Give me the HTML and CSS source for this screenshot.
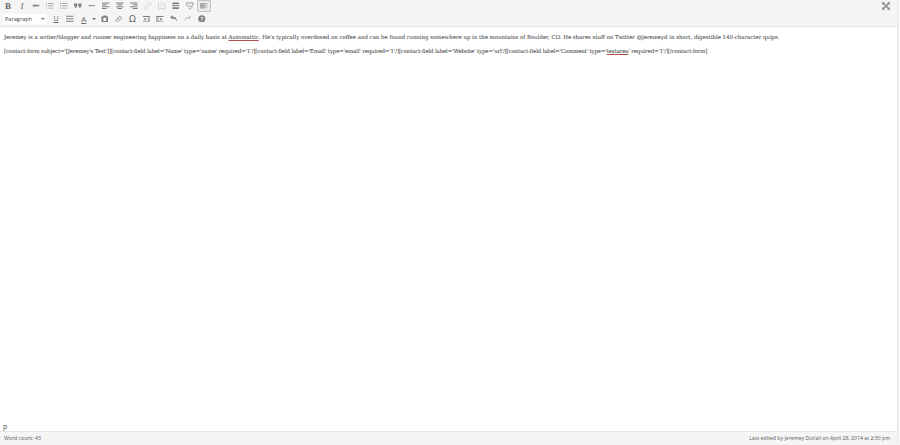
FILE: index.html
```html
<!DOCTYPE html>
<html lang="en">
<head>
  <meta charset="UTF-8">
  <title>Edit Post</title>
  <link rel="stylesheet" href="styles.css">
</head>
<body>
  <div class="editor">
    <div class="toolbar">
      <div class="toolbar-rows">
        <div class="row">
          <span class="btn bold">B</span>
          <span class="btn italic">I</span>
          <span class="btn strike">ABC</span>
          <span class="btn"><svg viewBox="0 0 8 8"><path class="light" d="M0 1h1v1H0zM0 3.500h1v1H0zM0 6h1v1H0zM2 1h6v1H2zM2 3.500h6v1H2zM2 6h6v1H2z"/></svg></span>
          <span class="btn"><svg viewBox="0 0 8 8"><path class="light" d="M0 .5h1v2H0zM0 3.500h1v1H0zM0 5.500h1v2H0zM2 1h6v1H2zM2 3.500h6v1H2zM2 6h6v1H2z"/></svg></span>
          <span class="btn"><svg viewBox="0 0 8 8"><path d="M0 1.500h3.400v3L2 6.500H.8l.8-2H0zM4.500 1.500h3.400v3L6.500 6.500H5.300l.8-2H4.500z"/></svg></span>
          <span class="btn"><svg viewBox="0 0 8 8"><path d="M.5 3.400h7v1h-7z"/></svg></span>
          <span class="btn"><svg viewBox="0 0 8 8"><path d="M0 .5h8v1H0zM0 2.500h5v1H0zM0 4.500h8v1H0zM0 6.500h5v1H0z"/></svg></span>
          <span class="btn"><svg viewBox="0 0 8 8"><path d="M0 .5h8v1H0zM1.500 2.500h5v1h-5zM0 4.500h8v1H0zM1.500 6.500h5v1h-5z"/></svg></span>
          <span class="btn"><svg viewBox="0 0 8 8"><path d="M0 .5h8v1H0zM3 2.500h5v1H3zM0 4.500h8v1H0zM3 6.500h5v1H3z"/></svg></span>
          <span class="btn"><svg viewBox="0 0 8 8"><path class="stroke off" d="M3.200 4.800l1.600-1.600M2.600 3.600L1 5.200a1.300 1.300 0 0 0 1.800 1.800l1.600-1.600M3.600 2.600L5.200 1a1.300 1.300 0 0 1 1.800 1.800L5.400 4.400"/></svg></span>
          <span class="btn"><svg viewBox="0 0 8 8"><path class="stroke off" d="M.5 1h5M.5 1v6h5M7.500 1v6M2 6l4-4M5 7h2.500"/></svg></span>
          <span class="btn"><svg viewBox="0 0 8 8"><path d="M.5 .5h7v2h-7zM0 3.500h8v1H0zM.5 5.500h7v2h-7z"/></svg></span>
          <span class="btn"><svg viewBox="0 0 8 8"><path class="stroke" d="M.5 1v2c0 1 1.500 1.500 3.500 1.500S7.500 4 7.500 3V1zM2.500 6.500L4 7.800l3-2.600"/></svg></span>
          <span class="btn active"><svg viewBox="0 0 8 8"><path d="M0 1h5.500v6H0zM6 1h2v1H6zM6 3h2v1H6zM6 5h2v1H6z" opacity=".6"/></svg></span>
        </div>
        <div class="row row-two">
          <span class="select">Paragraph<i class="caret"></i></span>
          <span class="btn underline">U</span>
          <span class="btn"><svg viewBox="0 0 8 8"><path d="M0 .7h8v1.100H0zM0 3.400h8v1.100H0zM0 6.100h8v1.100H0z"/></svg></span>
          <span class="btn color">A</span>
          <span class="color-arrow"><i class="caret"></i></span>
          <span class="btn"><svg viewBox="0 0 8 8"><path d="M.5 1.200h2V.4h3v.8h2V8h-7zM2.500 3v3.500h3V3z"/></svg></span>
          <span class="btn"><svg viewBox="0 0 8 8"><path class="stroke" d="M1 5.400L5.300 1.200l1.900 1.700-4.200 4.400H1.800L1 6.500zM3 3.500l1.900 1.800"/></svg></span>
          <span class="btn omega">&#937;</span>
          <span class="btn"><svg viewBox="0 0 8 8"><path d="M0 1h8v1H0zM5 3h3v1H5zM5 5h3v1H5zM0 7h8v.8H0zM3 3v3L.5 4.500z"/></svg></span>
          <span class="btn"><svg viewBox="0 0 8 8"><path d="M0 1h8v1H0zM0 3h3v1H0zM0 5h3v1H0zM0 7h8v.8H0zM4.500 3v3L7 4.500z"/></svg></span>
          <span class="btn"><svg viewBox="0 0 8 8"><path d="M0 2.500L3 .3v1.500c3 0 4.500 2 4.500 5.700C6.800 5.300 5.500 3.800 3 3.800v1z"/></svg></span>
          <span class="btn"><svg viewBox="0 0 8 8"><path class="off" d="M8 2.500L5 .3v1.500C2 1.800.5 3.800.5 7.500c.7-2.200 2-3.700 4.500-3.700v1z"/></svg></span>
          <span class="btn"><svg viewBox="0 0 8 8"><circle cx="4" cy="4" r="3.800"/><path class="hole" d="M3.500 4.900h1V4.400c1-.4 1.200-1 1-1.500C5.200 2 4 1.800 2.700 2.500l.3.800c.6-.3 1.200-.4 1.400-.1.200.3-.9.700-.9 1.200zM3.500 5.400h1v1h-1z"/></svg></span>
        </div>
      </div>
      <span class="fullscreen"><svg viewBox="0 0 9 9"><path d="M0 0h3L2.400 .9 4.500 3 6.600 .9 6 0h3v3L8.100 2.400 6 4.500 8.100 6.600 9 6v3H6l.6-.9L4.500 6 2.400 8.100 3 9H0V6l.9.6L3 4.500 .9 2.400 0 3z"/></svg></span>
    </div>
    <div class="content">
      <div class="body-text">
        <p>Jeremey is a writer/blogger and runner engineering happiness on a daily basis at <u>Automattic</u>. He's typically overdosed on coffee and can be found running somewhere up in the mountains of Boulder, CO. He shares stuff on Twitter @jeremeyd in short, digestible 140-character quips.</p>
        <p class="shortcode">[contact-form subject='[Jeremey's Test']][contact-field label='Name' type='name' required='1'/][contact-field label='Email' type='email' required='1'/][contact-field label='Website' type='url'/][contact-field label='Comment' type='<u>textarea</u>' required='1'/][/contact-form]</p>
      </div>
      <div class="path">p</div>
    </div>
    <div class="status">
      <span>Word count: 43</span>
      <span>Last edited by Jeremey DuVall on April 28, 2014 at 2:30 pm</span>
    </div>
  </div>
</body>
</html>
```

FILE: styles.css
```css
html, body {
  margin: 0;
  height: 100%;
  overflow: hidden;
  background: #f5f5f5;
}

.editor {
  width: 897px;
  height: 443px;
  display: flex;
  flex-direction: column;
  border-right: 1px solid #e5e5e5;
  font-family: "Open Sans", sans-serif;
  color: #444;
}

.toolbar {
  height: 26px;
  flex: none;
  display: flex;
  justify-content: space-between;
  background: #f5f5f5;
  border-bottom: 1px solid #e5e5e5;
}

.toolbar-rows {
  padding-left: 1px;
}

.row {
  height: 13px;
  display: flex;
  align-items: center;
  color: #666;
}

.row:first-child {
  height: 12px;
}

.btn {
  width: 14px;
  height: 12px;
  flex: none;
  display: flex;
  align-items: center;
  justify-content: center;
  font-size: 8px;
  line-height: 1;
}

.row-two .btn {
  width: 13.900px;
}

.btn svg {
  width: 7.500px;
  height: 7.500px;
  fill: #808080;
}

.btn .light {
  fill: #aaa;
}

.btn .off {
  fill: #ccc;
}

.btn .stroke {
  fill: none;
  stroke: #808080;
  stroke-width: .8;
}

.btn .stroke.off {
  stroke: #ccc;
}

.btn .hole {
  fill: #f5f5f5;
}

.btn.active {
  box-sizing: border-box;
  background: #ebebeb;
  border: 1px solid #c4c4c4;
  border-radius: 1px;
}

.bold {
  font-family: "Liberation Serif", serif;
  font-weight: bold;
  font-size: 9px;
}

.italic {
  font-family: "Liberation Serif", serif;
  font-style: italic;
  font-size: 9px;
}

.strike {
  font-size: 3.500px;
  text-decoration: line-through;
  color: #888;
}

.underline {
  text-decoration: underline;
  font-size: 7px;
}

.color {
  text-decoration: underline;
  font-size: 8px;
}

.color-arrow {
  width: 7px;
  flex: none;
  display: flex;
  justify-content: center;
}

.omega {
  font-family: "DejaVu Sans", sans-serif;
  font-size: 9px;
  padding-top: 2px;
  box-sizing: border-box;
}

.select {
  width: 44px;
  height: 10px;
  flex: none;
  margin: 0 2px 0 2px;
  padding-left: 2px;
  box-sizing: border-box;
  display: flex;
  align-items: center;
  justify-content: space-between;
  background: #fff;
  font-size: 5.600px;
  color: #444;
}

.caret {
  width: 0;
  height: 0;
  margin-right: 2px;
  border: 2px solid transparent;
  border-top-color: #777;
  border-bottom: 0;
}

.color-arrow .caret {
  margin-right: 0;
}

.fullscreen {
  margin: 2px 7px 0 0;
}

.fullscreen svg {
  width: 8px;
  height: 8px;
  fill: #999;
  display: block;
}

.content {
  flex: 1;
  display: flex;
  flex-direction: column;
  justify-content: space-between;
  background: #fff;
  min-height: 0;
}

.body-text {
  padding: 5.500px 4px 0;
  font-family: "DejaVu Serif", serif;
  font-size: 5.410px;
  line-height: 8px;
  color: #3a3a3a;
  -webkit-text-stroke: .05px #555;
}

.body-text p {
  margin: 0 0 6px;
}

.body-text .shortcode {
  letter-spacing: -.135px;
}

.body-text u {
  text-decoration: underline solid #b0504a;
  text-decoration-thickness: 1px;
  text-underline-offset: 1px;
}

.path {
  padding-left: 3px;
  font-size: 7px;
  line-height: 9px;
  color: #555;
}

.status {
  height: 11px;
  flex: none;
  display: flex;
  align-items: center;
  justify-content: space-between;
  padding: 0 7px 0 4px;
  background: #f5f5f5;
  border-top: 1px solid #e5e5e5;
  font-size: 5.200px;
  color: #555;
}
```
